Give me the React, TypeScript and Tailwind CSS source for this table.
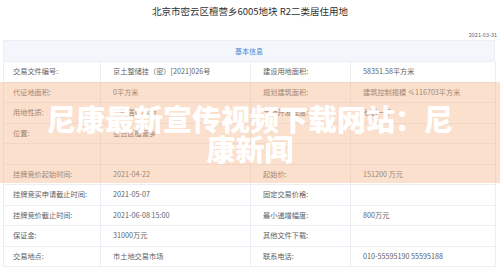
import React from "react";

const rows: [string, string, string, string][] = [
  ["交易文件编号:", "京土整储挂（密）[2021]026号", "建设用地面积:", "58351.58平方米"],
  ["代征地面积:", "0平方米", "规划建筑面积:", "建筑控制规模 ≤116703平方米"],
  ["用地性质:", "二类居住用地", "土地开发程度:", "七通一平"],
  ["位置:", "密云区檀营乡", "", ""],
  ["", "", "", ""],
  ["挂牌竞价起始时间:", "2021-04-22", "起始价:", "151200 万元"],
  ["挂牌竞买申请截止时间:", "2021-05-07", "固定交易价格:", ""],
  ["挂牌竞价截止时间:", "2021-06-08 15:00", "最小递增幅度:", "800万元"],
  ["保证金:", "31000万元", "其他文件下载:", ""],
  ["交易地点:", "市土地交易市场", "联系电话:", "010-55595190 55595188"],
];

export default function App() {
  return (
    <div
      className="relative w-[500px] h-[268px] overflow-hidden bg-white"
      style={{ fontFamily: '"Noto Sans CJK SC", "Noto Sans", sans-serif' }}
    >
      <div className="pt-[4px] text-center text-[9.5px] leading-[14px] text-[#303133]">
        北京市密云区檀营乡6005地块 R2二类居住用地
      </div>
      <div className="mt-[13px] pr-[3px] text-right text-[5.5px] leading-[8px] text-[#606266]">
        2021-03-31
      </div>
      <div className="mx-[3px] mt-[1px] w-[492px] border-l border-t border-[#ebeef5] bg-white">
        <div className="flex h-[21px] items-center justify-center border-b border-r border-[#ebeef5] bg-[#f3f7fc] text-[7px] text-[#4a86d6]">
          基本信息
        </div>
        {rows.map((r, i) => (
          <div key={i} className="grid h-[20.5px] grid-cols-[97px_150px_100px_145px] text-[7.2px] text-[#606266]">
            <div className="flex items-center border-b border-r border-[#ebeef5] pl-[9px]">{r[0]}</div>
            <div className="flex items-center border-b border-r border-[#ebeef5] pl-[12px]">{r[1]}</div>
            <div className="flex items-center border-b border-r border-[#ebeef5] pl-[12px]">{r[2]}</div>
            <div className="flex items-center border-b border-r border-[#ebeef5] pl-[12px]">{r[3]}</div>
          </div>
        ))}
      </div>
      <div className="absolute left-0 top-[82px] flex h-[101px] w-[500px] items-center justify-center bg-[rgba(245,180,135,0.42)]">
        <div className="w-[420px] text-center text-[29px] font-black leading-[30px] text-white">
          尼康最新宣传视频下载网站：尼康新闻
        </div>
      </div>
    </div>
  );
}
